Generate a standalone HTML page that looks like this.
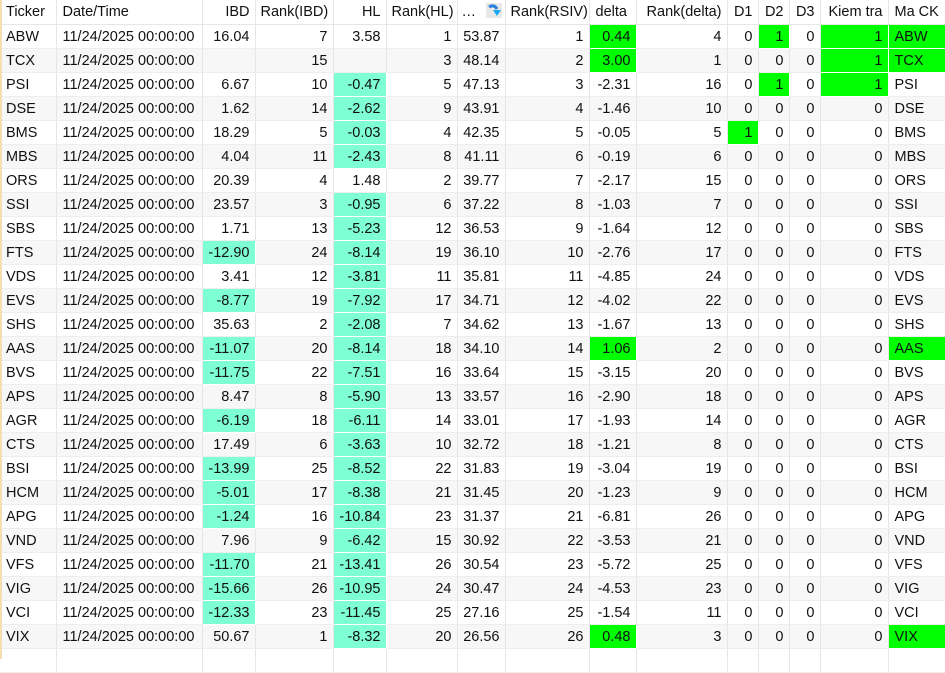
<!DOCTYPE html>
<html><head><meta charset="utf-8"><style>
body{margin:0;width:945px;height:659px;overflow:hidden;background:#fff;font-family:"Liberation Sans",sans-serif;font-size:14.5px;color:#111}
table{border-collapse:collapse;table-layout:fixed;width:945px;position:absolute;left:0;top:0}
td{height:23px;box-sizing:border-box;border-right:1px solid #e6e6e6;border-bottom:1px solid #eeeeee;padding:2px 5px 0 5px;white-space:nowrap;overflow:hidden;text-align:right;line-height:21px}
tr{height:24px}
td.l{text-align:left;padding-left:6px}
tr:nth-child(odd) td{background:#f7f7f7}
tr.h td{background:#fff;border-bottom:1px solid #e6e6e6}
td.g{background:#00ff00!important;border:1px solid #fff}
td.a{background:#7fffd4!important;border:1px solid #fff}
tr.e td{background:#fff}
</style></head><body>
<table>
<colgroup><col style="width:56px"><col style="width:146px"><col style="width:53px"><col style="width:78px"><col style="width:53px"><col style="width:71px"><col style="width:48px"><col style="width:84px"><col style="width:47px"><col style="width:91px"><col style="width:31px"><col style="width:31px"><col style="width:31px"><col style="width:68px"><col style="width:57px"></colgroup>
<tr class="h"><td class="l">Ticker</td><td class="l">Date/Time</td><td>IBD</td><td>Rank(IBD)</td><td>HL</td><td>Rank(HL)</td><td class="l" style="padding-left:4px">… <svg width="16" height="15" viewBox="0 0 16 15" style="vertical-align:-2px;margin-left:6px"><rect width="16" height="15" fill="#e8e8e8"/><path d="M3 4 Q8 1 11 6" stroke="#2a7fe0" stroke-width="3" fill="none"/><path d="M7 7 L15 7 L11 13 Z" fill="#19a8f0"/></svg></td><td>Rank(RSIV)</td><td class="l">delta</td><td>Rank(delta)</td><td>D1</td><td>D2</td><td>D3</td><td>Kiem tra</td><td class="l">Ma CK</td></tr>
<tr><td class="l">ABW</td><td class="l">11/24/2025 00:00:00</td><td>16.04</td><td>7</td><td>3.58</td><td>1</td><td>53.87</td><td>1</td><td class="g">0.44</td><td>4</td><td>0</td><td class="g">1</td><td>0</td><td class="g">1</td><td class="l g">ABW</td></tr>
<tr><td class="l">TCX</td><td class="l">11/24/2025 00:00:00</td><td></td><td>15</td><td></td><td>3</td><td>48.14</td><td>2</td><td class="g">3.00</td><td>1</td><td>0</td><td>0</td><td>0</td><td class="g">1</td><td class="l g">TCX</td></tr>
<tr><td class="l">PSI</td><td class="l">11/24/2025 00:00:00</td><td>6.67</td><td>10</td><td class="a">-0.47</td><td>5</td><td>47.13</td><td>3</td><td>-2.31</td><td>16</td><td>0</td><td class="g">1</td><td>0</td><td class="g">1</td><td class="l">PSI</td></tr>
<tr><td class="l">DSE</td><td class="l">11/24/2025 00:00:00</td><td>1.62</td><td>14</td><td class="a">-2.62</td><td>9</td><td>43.91</td><td>4</td><td>-1.46</td><td>10</td><td>0</td><td>0</td><td>0</td><td>0</td><td class="l">DSE</td></tr>
<tr><td class="l">BMS</td><td class="l">11/24/2025 00:00:00</td><td>18.29</td><td>5</td><td class="a">-0.03</td><td>4</td><td>42.35</td><td>5</td><td>-0.05</td><td>5</td><td class="g">1</td><td>0</td><td>0</td><td>0</td><td class="l">BMS</td></tr>
<tr><td class="l">MBS</td><td class="l">11/24/2025 00:00:00</td><td>4.04</td><td>11</td><td class="a">-2.43</td><td>8</td><td>41.11</td><td>6</td><td>-0.19</td><td>6</td><td>0</td><td>0</td><td>0</td><td>0</td><td class="l">MBS</td></tr>
<tr><td class="l">ORS</td><td class="l">11/24/2025 00:00:00</td><td>20.39</td><td>4</td><td>1.48</td><td>2</td><td>39.77</td><td>7</td><td>-2.17</td><td>15</td><td>0</td><td>0</td><td>0</td><td>0</td><td class="l">ORS</td></tr>
<tr><td class="l">SSI</td><td class="l">11/24/2025 00:00:00</td><td>23.57</td><td>3</td><td class="a">-0.95</td><td>6</td><td>37.22</td><td>8</td><td>-1.03</td><td>7</td><td>0</td><td>0</td><td>0</td><td>0</td><td class="l">SSI</td></tr>
<tr><td class="l">SBS</td><td class="l">11/24/2025 00:00:00</td><td>1.71</td><td>13</td><td class="a">-5.23</td><td>12</td><td>36.53</td><td>9</td><td>-1.64</td><td>12</td><td>0</td><td>0</td><td>0</td><td>0</td><td class="l">SBS</td></tr>
<tr><td class="l">FTS</td><td class="l">11/24/2025 00:00:00</td><td class="a">-12.90</td><td>24</td><td class="a">-8.14</td><td>19</td><td>36.10</td><td>10</td><td>-2.76</td><td>17</td><td>0</td><td>0</td><td>0</td><td>0</td><td class="l">FTS</td></tr>
<tr><td class="l">VDS</td><td class="l">11/24/2025 00:00:00</td><td>3.41</td><td>12</td><td class="a">-3.81</td><td>11</td><td>35.81</td><td>11</td><td>-4.85</td><td>24</td><td>0</td><td>0</td><td>0</td><td>0</td><td class="l">VDS</td></tr>
<tr><td class="l">EVS</td><td class="l">11/24/2025 00:00:00</td><td class="a">-8.77</td><td>19</td><td class="a">-7.92</td><td>17</td><td>34.71</td><td>12</td><td>-4.02</td><td>22</td><td>0</td><td>0</td><td>0</td><td>0</td><td class="l">EVS</td></tr>
<tr><td class="l">SHS</td><td class="l">11/24/2025 00:00:00</td><td>35.63</td><td>2</td><td class="a">-2.08</td><td>7</td><td>34.62</td><td>13</td><td>-1.67</td><td>13</td><td>0</td><td>0</td><td>0</td><td>0</td><td class="l">SHS</td></tr>
<tr><td class="l">AAS</td><td class="l">11/24/2025 00:00:00</td><td class="a">-11.07</td><td>20</td><td class="a">-8.14</td><td>18</td><td>34.10</td><td>14</td><td class="g">1.06</td><td>2</td><td>0</td><td>0</td><td>0</td><td>0</td><td class="l g">AAS</td></tr>
<tr><td class="l">BVS</td><td class="l">11/24/2025 00:00:00</td><td class="a">-11.75</td><td>22</td><td class="a">-7.51</td><td>16</td><td>33.64</td><td>15</td><td>-3.15</td><td>20</td><td>0</td><td>0</td><td>0</td><td>0</td><td class="l">BVS</td></tr>
<tr><td class="l">APS</td><td class="l">11/24/2025 00:00:00</td><td>8.47</td><td>8</td><td class="a">-5.90</td><td>13</td><td>33.57</td><td>16</td><td>-2.90</td><td>18</td><td>0</td><td>0</td><td>0</td><td>0</td><td class="l">APS</td></tr>
<tr><td class="l">AGR</td><td class="l">11/24/2025 00:00:00</td><td class="a">-6.19</td><td>18</td><td class="a">-6.11</td><td>14</td><td>33.01</td><td>17</td><td>-1.93</td><td>14</td><td>0</td><td>0</td><td>0</td><td>0</td><td class="l">AGR</td></tr>
<tr><td class="l">CTS</td><td class="l">11/24/2025 00:00:00</td><td>17.49</td><td>6</td><td class="a">-3.63</td><td>10</td><td>32.72</td><td>18</td><td>-1.21</td><td>8</td><td>0</td><td>0</td><td>0</td><td>0</td><td class="l">CTS</td></tr>
<tr><td class="l">BSI</td><td class="l">11/24/2025 00:00:00</td><td class="a">-13.99</td><td>25</td><td class="a">-8.52</td><td>22</td><td>31.83</td><td>19</td><td>-3.04</td><td>19</td><td>0</td><td>0</td><td>0</td><td>0</td><td class="l">BSI</td></tr>
<tr><td class="l">HCM</td><td class="l">11/24/2025 00:00:00</td><td class="a">-5.01</td><td>17</td><td class="a">-8.38</td><td>21</td><td>31.45</td><td>20</td><td>-1.23</td><td>9</td><td>0</td><td>0</td><td>0</td><td>0</td><td class="l">HCM</td></tr>
<tr><td class="l">APG</td><td class="l">11/24/2025 00:00:00</td><td class="a">-1.24</td><td>16</td><td class="a">-10.84</td><td>23</td><td>31.37</td><td>21</td><td>-6.81</td><td>26</td><td>0</td><td>0</td><td>0</td><td>0</td><td class="l">APG</td></tr>
<tr><td class="l">VND</td><td class="l">11/24/2025 00:00:00</td><td>7.96</td><td>9</td><td class="a">-6.42</td><td>15</td><td>30.92</td><td>22</td><td>-3.53</td><td>21</td><td>0</td><td>0</td><td>0</td><td>0</td><td class="l">VND</td></tr>
<tr><td class="l">VFS</td><td class="l">11/24/2025 00:00:00</td><td class="a">-11.70</td><td>21</td><td class="a">-13.41</td><td>26</td><td>30.54</td><td>23</td><td>-5.72</td><td>25</td><td>0</td><td>0</td><td>0</td><td>0</td><td class="l">VFS</td></tr>
<tr><td class="l">VIG</td><td class="l">11/24/2025 00:00:00</td><td class="a">-15.66</td><td>26</td><td class="a">-10.95</td><td>24</td><td>30.47</td><td>24</td><td>-4.53</td><td>23</td><td>0</td><td>0</td><td>0</td><td>0</td><td class="l">VIG</td></tr>
<tr><td class="l">VCI</td><td class="l">11/24/2025 00:00:00</td><td class="a">-12.33</td><td>23</td><td class="a">-11.45</td><td>25</td><td>27.16</td><td>25</td><td>-1.54</td><td>11</td><td>0</td><td>0</td><td>0</td><td>0</td><td class="l">VCI</td></tr>
<tr><td class="l">VIX</td><td class="l">11/24/2025 00:00:00</td><td>50.67</td><td>1</td><td class="a">-8.32</td><td>20</td><td>26.56</td><td>26</td><td class="g">0.48</td><td>3</td><td>0</td><td>0</td><td>0</td><td>0</td><td class="l g">VIX</td></tr>
<tr class="e"><td></td><td></td><td></td><td></td><td></td><td></td><td></td><td></td><td></td><td></td><td></td><td></td><td></td><td></td><td></td></tr>
</table>
<div style="position:absolute;left:0;top:0;width:2px;height:659px;background:#f5deb3"></div>
</body></html>
